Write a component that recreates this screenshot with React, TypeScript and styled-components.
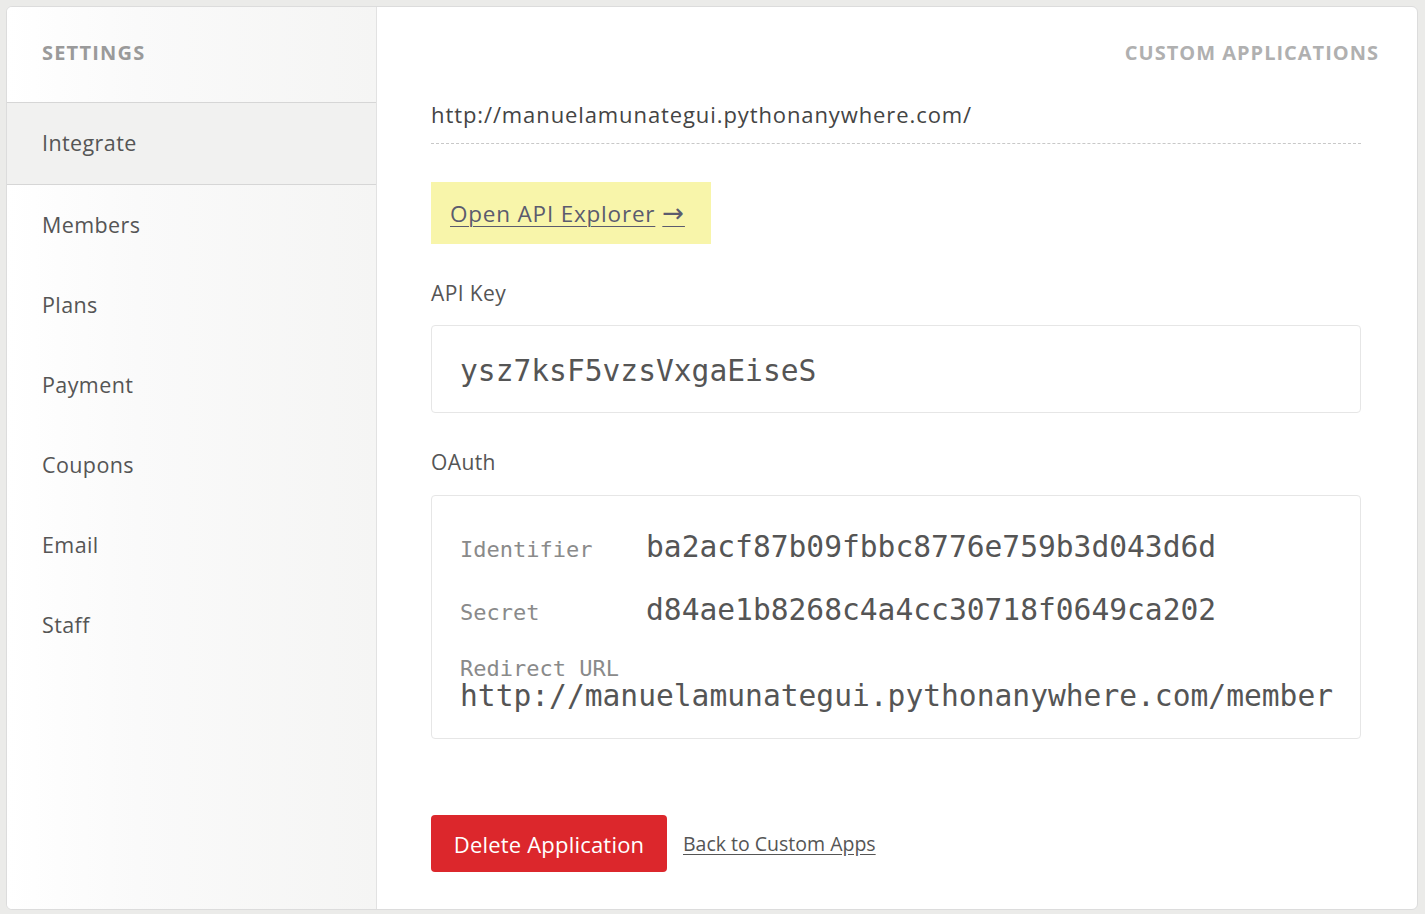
import React from 'react';
import styled, { createGlobalStyle } from 'styled-components';

const GlobalStyle = createGlobalStyle`
    html, body {
        margin: 0;
        padding: 0;
        background: #ebebe9;
        font-family: "Open Sans", "Liberation Sans", sans-serif;
    }
    * { box-sizing: border-box; }
`;

const Card = styled.div`
    margin: 6px;
    width: 1412px;
    height: 904px;
    background: white;
    border: 1px solid #dcdcdc;
    border-radius: 6px;
    display: flex;
    overflow: hidden;
`;

const Sidebar = styled.aside`
    width: 370px;
    flex-shrink: 0;
    background: linear-gradient(to right, #ffffff 0%, #fafafa 35%, #f5f5f4 100%);
    border-right: 1px solid #e2e2e2;
    display: flex;
    flex-direction: column;
`;

const SidebarHeader = styled.div`
    height: 96px;
    padding: 0 0 5px 35px;
    display: flex;
    align-items: center;
    border-bottom: 1px solid #d6d6d6;
    font-size: 20px;
    font-weight: 700;
    color: #9a9a9a;
    letter-spacing: 1.2px;
`;

const NavItem = styled.div<{ $active?: boolean }>`
    height: ${(p) => (p.$active ? '82px' : '80px')};
    padding: 0 0 2px 35px;
    display: flex;
    align-items: center;
    font-size: 21.5px;
    letter-spacing: 0.4px;
    color: #555;
    background: ${(p) => (p.$active ? '#f1f1f0' : 'transparent')};
    border-bottom: ${(p) => (p.$active ? '1px solid #d6d6d6' : 'none')};
`;

const Main = styled.main`
    flex: 1;
    display: flex;
    flex-direction: column;
    padding: 0 56px 0 54px;
`;

const TopBar = styled.div`
    height: 94px;
    padding-bottom: 4px;
    display: flex;
    align-items: center;
    justify-content: flex-end;
    margin-right: -18px;
    font-size: 20px;
    font-weight: 700;
    color: #b0b0b0;
    letter-spacing: 1px;
`;

const UrlLine = styled.div`
    font-size: 22px;
    letter-spacing: 0.9px;
    color: #444;
    padding-bottom: 15px;
    margin-top: -1px;
    border-bottom: 1px dashed #c8c8c8;
    line-height: 28px;
`;

const ExplorerBox = styled.div`
    margin-top: 38px;
    align-self: flex-start;
    background: #f8f5aa;
    width: 280px;
    height: 62px;
    padding-left: 19px;
    display: flex;
    align-items: center;
`;

const ExplorerLink = styled.a`
    font-size: 22.5px;
    letter-spacing: 0.8px;
    color: #5b5b6e;
    text-decoration: underline;
    text-underline-offset: 4px;
    text-decoration-thickness: 1px;
    line-height: 30px;
`;

const Arrow = styled.span`
    font-family: "DejaVu Sans", sans-serif;
    font-size: 26px;
    margin-left: 7px;
`;

const Label = styled.div<{ $top: number }>`
    margin-top: ${(p) => p.$top}px;
    font-size: 21px;
    letter-spacing: 0.4px;
    color: #555;
    line-height: 28px;
`;

const CodeBox = styled.div<{ $top: number }>`
    margin-top: ${(p) => p.$top}px;
    border: 1px solid #e6e6e6;
    border-radius: 4px;
    font-family: "DejaVu Sans Mono", "Liberation Mono", monospace;
    color: #555;
`;

const KeyText = styled.div`
    height: 86px;
    padding: 3px 0 0 28px;
    display: flex;
    align-items: center;
    font-size: 29.6px;
`;

const OAuthBody = styled.div`
    padding: 36px 0 27px 28px;
    display: flex;
    flex-direction: column;
`;

const OAuthRow = styled.div`
    display: grid;
    grid-template-columns: 186px 1fr;
    align-items: baseline;
    height: 63px;
`;

const OAuthLabel = styled.span`
    font-size: 22px;
    line-height: 24px;
    color: #8a8a8a;
`;

const OAuthValue = styled.span`
    font-size: 29.6px;
    line-height: 30px;
    color: #555;
`;

const RedirectBlock = styled.div`
    display: flex;
    flex-direction: column;
    margin-top: -1px;
`;

const Actions = styled.div`
    margin-top: 76px;
    display: flex;
    align-items: center;
    gap: 16px;
`;

const DeleteButton = styled.button`
    background: #dc272c;
    color: white;
    border: none;
    border-radius: 4px;
    width: 236px;
    height: 57px;
    padding: 0;
    font-family: inherit;
    font-size: 22px;
    letter-spacing: 0.2px;
    cursor: pointer;
`;

const BackLink = styled.a`
    font-size: 19.5px;
    color: #555;
    text-decoration: underline;
    text-underline-offset: 3px;
`;

const navItems = ['Members', 'Plans', 'Payment', 'Coupons', 'Email', 'Staff'];

const App: React.FC = () => {
    return (
        <>
            <GlobalStyle />
            <Card>
                <Sidebar>
                    <SidebarHeader>SETTINGS</SidebarHeader>
                    <NavItem $active>Integrate</NavItem>
                    {navItems.map((item) => (
                        <NavItem key={item}>{item}</NavItem>
                    ))}
                </Sidebar>

                <Main>
                    <TopBar>CUSTOM APPLICATIONS</TopBar>
                    <UrlLine>http://manuelamunategui.pythonanywhere.com/</UrlLine>

                    <ExplorerBox>
                        <ExplorerLink href="#">
                            Open API Explorer<Arrow>→</Arrow>
                        </ExplorerLink>
                    </ExplorerBox>

                    <Label $top={35}>API Key</Label>
                    <CodeBox $top={18}>
                        <KeyText>ysz7ksF5vzsVxgaEiseS</KeyText>
                    </CodeBox>

                    <Label $top={35}>OAuth</Label>
                    <CodeBox $top={19}>
                        <OAuthBody>
                            <OAuthRow>
                                <OAuthLabel>Identifier</OAuthLabel>
                                <OAuthValue>ba2acf87b09fbbc8776e759b3d043d6d</OAuthValue>
                            </OAuthRow>
                            <OAuthRow>
                                <OAuthLabel>Secret</OAuthLabel>
                                <OAuthValue>d84ae1b8268c4a4cc30718f0649ca202</OAuthValue>
                            </OAuthRow>
                            <RedirectBlock>
                                <OAuthLabel>Redirect URL</OAuthLabel>
                                <OAuthValue>http://manuelamunategui.pythonanywhere.com/member</OAuthValue>
                            </RedirectBlock>
                        </OAuthBody>
                    </CodeBox>

                    <Actions>
                        <DeleteButton>Delete Application</DeleteButton>
                        <BackLink href="#">Back to Custom Apps</BackLink>
                    </Actions>
                </Main>
            </Card>
        </>
    );
};

export default App;
